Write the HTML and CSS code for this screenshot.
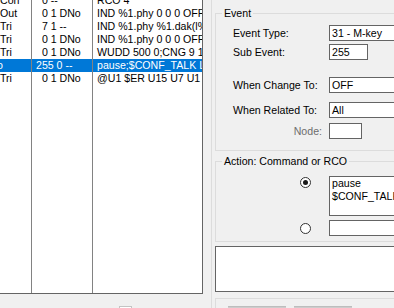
FILE: index.html
```html
<!DOCTYPE html>
<html>
<head>
<meta charset="utf-8">
<link rel="stylesheet" href="styles.css">
</head>
<body>
<div class="app">
  <div class="left">
    <div class="list">
      <div class="col c1">
        <div class="rows">
          <div class="cell">Con</div>
          <div class="cell">Out</div>
          <div class="cell">Tri</div>
          <div class="cell">Tri</div>
          <div class="cell">Tri</div>
          <div class="cell sel"><span class="cut">o</span></div>
          <div class="cell">Tri</div>
        </div>
      </div>
      <div class="col c2">
        <div class="rows">
          <div class="cell">  0 --</div>
          <div class="cell">  0 1 DNo</div>
          <div class="cell">  7 1 --</div>
          <div class="cell">  0 1 DNo</div>
          <div class="cell">  0 1 DNo</div>
          <div class="cell sel">255 0 --</div>
          <div class="cell">  0 1 DNo</div>
        </div>
      </div>
      <div class="col c3">
        <div class="rows">
          <div class="cell">RCO 4</div>
          <div class="cell">IND %1.phy 0 0 0 OFF</div>
          <div class="cell">IND %1.phy %1.dak(l%1</div>
          <div class="cell">IND %1.phy 0 0 0 OFF</div>
          <div class="cell">WUDD 500 0;CNG 9 1</div>
          <div class="cell sel">pause;$CONF_TALK L</div>
          <div class="cell">@U1 $ER U15 U7 U1</div>
        </div>
      </div>
    </div>
    <div class="under">
      <span class="check"></span>
    </div>
  </div>

  <div class="right">
    <fieldset class="group event">
      <legend>Event</legend>
      <div class="form">
        <div class="row r1">
          <span class="lbl">Event Type:</span>
          <span class="box wide">31 - M-key</span>
        </div>
        <div class="row r2">
          <span class="lbl">Sub Event:</span>
          <span class="box sub">255</span>
        </div>
        <div class="row r3">
          <span class="lbl">When Change To:</span>
          <span class="box wide">OFF</span>
        </div>
        <div class="row r4">
          <span class="lbl">When Related To:</span>
          <span class="box wide">All</span>
        </div>
        <div class="row r5">
          <span class="lbl dis">Node:</span>
          <span class="box node"></span>
        </div>
      </div>
    </fieldset>

    <fieldset class="group action">
      <legend>Action: Command or RCO</legend>
      <div class="arow a1">
        <span class="radio on"></span>
        <div class="box area">pause
$CONF_TALK L</div>
      </div>
      <div class="arow a2">
        <span class="radio"></span>
        <span class="box wide"></span>
      </div>
    </fieldset>

    <div class="bigbox"></div>

    <div class="btngroup">
      <span class="btn"></span>
      <span class="btn"></span>
    </div>
  </div>
</div>
</body>
</html>
```

FILE: styles.css
```css
* { box-sizing: border-box; }
html, body {
  margin: 0;
  padding: 0;
  width: 394px;
  height: 308px;
  overflow: hidden;
  background: #f0f0f0;
  font-family: "Liberation Sans", Arial, sans-serif;
  font-size: 10.6px;
  color: #000;
}
.app {
  display: flex;
  height: 308px;
  overflow: hidden;
}
.left {
  width: 203px;
  flex: none;
  display: flex;
  flex-direction: column;
}
.list {
  flex: none;
  height: 294px;
  display: flex;
  background: #fff;
  border-right: 1px solid #646464;
  border-bottom: 1px solid #646464;
  overflow: hidden;
}
.col {
  overflow: hidden;
  min-width: 0;
}
.c1 { width: 32px; border-right: 1px solid #828282; flex: none; }
.c2 { width: 61px; border-right: 1px solid #828282; flex: none; }
.c3 { flex: 1; }
.rows { margin-top: -6px; }
.cell {
  height: 13px;
  line-height: 13px;
  white-space: pre;
  overflow: hidden;
}
.c1 .cell { padding-left: 0; }
.c2 .cell { padding-left: 4px; }
.c3 .cell { padding-left: 4px; }
.cell.sel { background: #0078d7; color: #fff; }
.cut { margin-left: -3px; }
.under {
  flex: none;
  padding: 12px 0 0 119px;
}
.check {
  display: block;
  width: 13px;
  height: 13px;
  background: #fff;
  border: 1px solid #c4c4c4;
}

.right {
  flex: 1;
  margin-left: 8px;
  border-left: 1px solid #dcdcdc;
  padding-left: 3px;
  overflow: hidden;
  display: flex;
  flex-direction: column;
  align-items: flex-start;
}
.right > * { flex: none; }
.group {
  margin: 0;
  padding: 0;
  border: 1px solid #dcdcdc;
  width: 240px;
  min-width: 240px;
}
.group legend {
  margin-left: 6px;
  padding: 0 2px;
  line-height: 13px;
  height: 13px;
}
.event { margin-top: 7px; padding-bottom: 11px; }
.form { display: flex; flex-direction: column; padding-top: 5px; }
.row {
  display: flex;
  align-items: center;
  padding-left: 17px;
}
.r2 { margin-top: 3px; }
.r3 { margin-top: 17px; }
.r4 { margin-top: 9px; }
.r5 { margin-top: 5px; }
.lbl {
  width: 96px;
  flex: none;
  white-space: nowrap;
}
.lbl.dis {
  color: #6d6d6d;
  text-align: right;
  padding-right: 7px;
}
.box {
  display: block;
  height: 16px;
  line-height: 14px;
  background: #fff;
  border: 1px solid #646464;
  padding: 0 2px;
  white-space: pre;
}
.wide { width: 120px; }
.sub { width: 39px; }
.node { width: 33px; }

.action { margin-top: 4px; padding-bottom: 5px; }
.arow {
  display: flex;
  align-items: flex-start;
  padding-left: 84px;
}
.a1 { margin-top: 8px; }
.a2 { margin-top: 4px; align-items: center; }
.radio {
  display: block;
  flex: none;
  width: 11px;
  height: 11px;
  border: 1px solid #333;
  border-radius: 50%;
  background: #fff;
  margin-right: 18px;
  position: relative;
}
.a1 .radio { margin-top: 1px; }
.radio.on::after {
  content: "";
  position: absolute;
  left: 2px;
  top: 2px;
  width: 5px;
  height: 5px;
  border-radius: 50%;
  background: #1a1a1a;
}
.area {
  width: 120px;
  height: 40px;
  line-height: 13px;
}

.bigbox {
  margin-top: 4px;
  width: 240px;
  min-width: 240px;
  height: 46px;
  background: #fff;
  border: 1px solid #646464;
}
.btngroup {
  margin-top: 6px;
  width: 240px;
  min-width: 240px;
  height: 30px;
  border-top: 1px solid #dcdcdc;
  border-left: 1px solid #dcdcdc;
  padding: 7px 0 0 12px;
  display: flex;
  gap: 8px;
}
.btn {
  display: block;
  flex: none;
  width: 58px;
  height: 20px;
  background: #cccccc;
  border-top: 1px solid #bdbdbd;
}
```
